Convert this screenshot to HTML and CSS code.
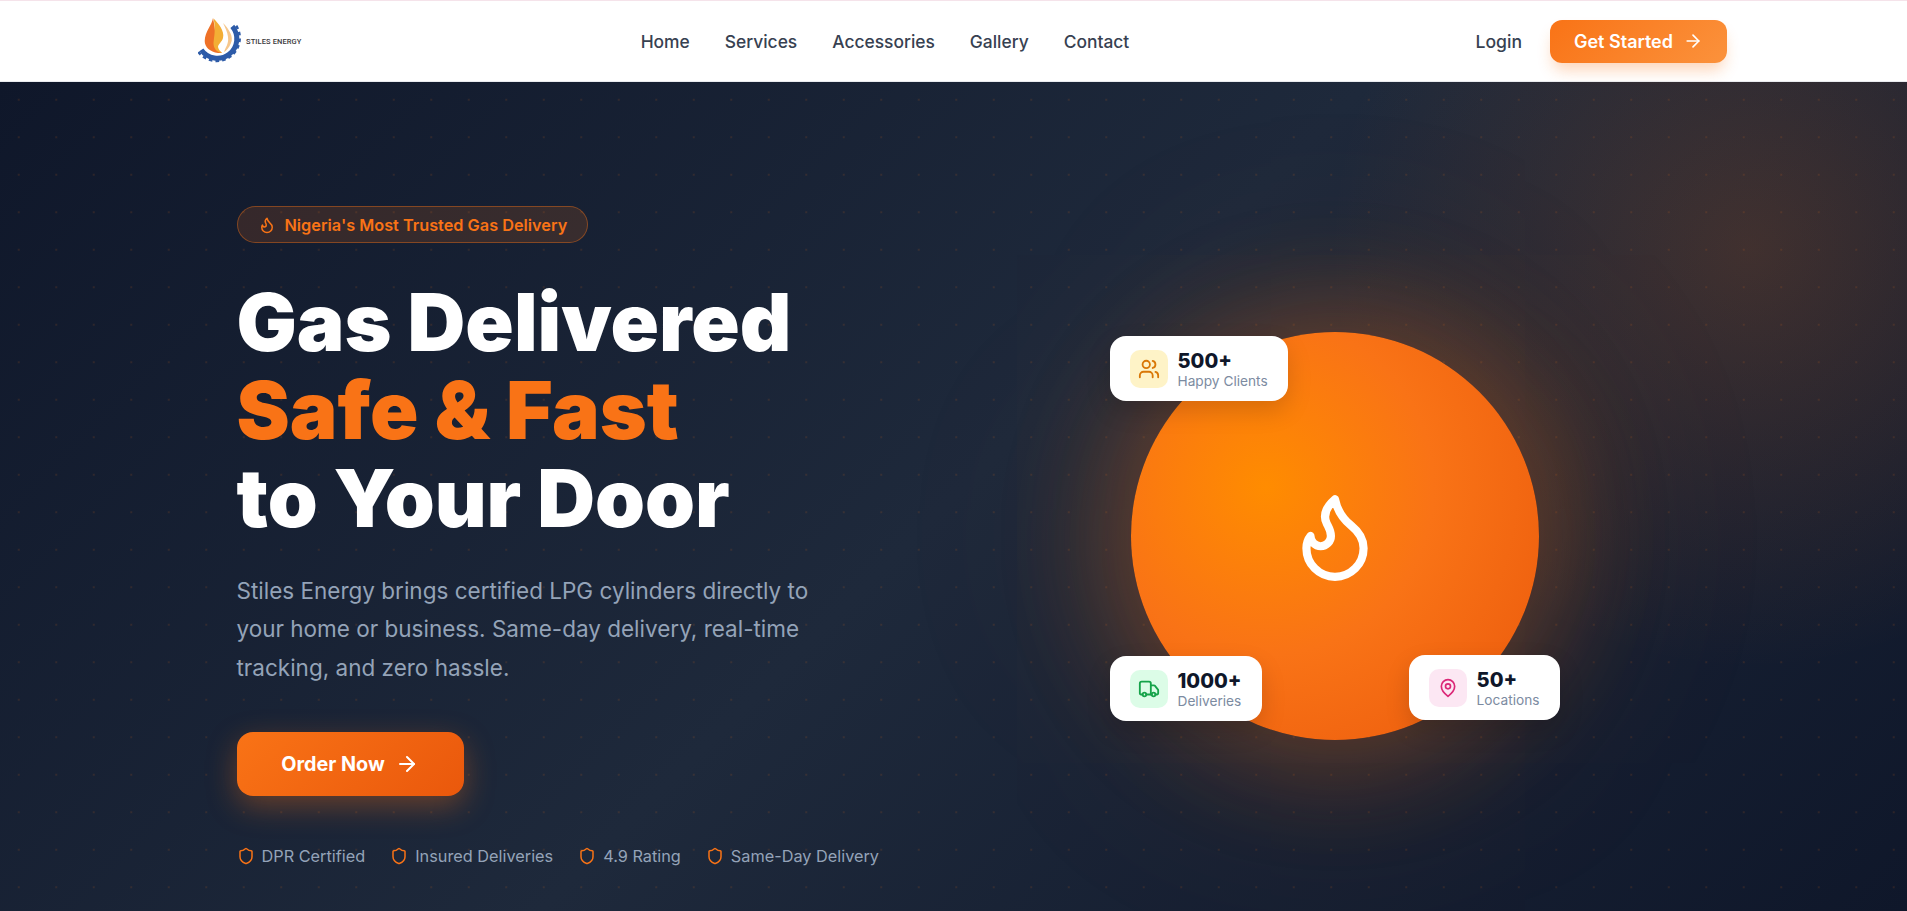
FILE: index.html
```html
<!DOCTYPE html>
<html lang="en">
<head>
  <meta charset="UTF-8">
  <title>Stiles Energy</title>
  <meta name="viewport" content="width=device-width, initial-scale=1">
  <link rel="stylesheet" href="styles.css">
</head>
<body>
<header class="navbar">
  <div class="navbar-inner">
    <a class="logo" href="#">
      <svg class="logo-mark" viewBox="0 0 44 48" aria-hidden="true">
        <path class="gear-ring" d="M3.3 32.9A19.5 19.5 0 1 0 34.3 9.3"/>
        <path class="gear-teeth" d="M.4 34.9A23 23 0 1 0 37 7"/>
        <path fill="#ee7127" d="M15 1C14 8 7 14 6.7 24C6.7 30 12 35 20 36L24 36C20 33 16 30 17 25C18 20 17 10 15 1z"/>
        <path fill="#f3ae35" d="M15.5 1.5C20 6 27 14 25 21C24 25 20 27 20 30C20.5 33 23 35 24 36C18 35 15.5 31 15.5 26C16 20 18 12 15.5 1.5z"/>
        <path fill="#f6c78c" d="M25 6C31 12 36 20 33 26C31 31 28 34 26 35C27 31 31 27 30 20C29.5 15 27 10 25 6z"/>
      </svg>
      <span class="logo-text">STILES ENERGY</span>
    </a>
    <nav class="nav-links">
      <a href="#">Home</a>
      <a href="#">Services</a>
      <a href="#">Accessories</a>
      <a href="#">Gallery</a>
      <a href="#">Contact</a>
    </nav>
    <div class="nav-actions">
      <a class="login" href="#">Login</a>
      <a class="btn-started" href="#">Get Started
        <svg class="icon" viewBox="0 0 24 24"><path d="M5 12h14"/><path d="m12 5 7 7-7 7"/></svg>
      </a>
    </div>
  </div>
</header>

<section class="hero">
  <div class="hero-inner">
    <div class="hero-copy">
      <div class="pill">
        <svg class="icon pill-icon" viewBox="0 0 24 24"><path d="M8.5 14.5A2.5 2.5 0 0 0 11 12c0-1.38-.5-2-1-3-1.072-2.143-.224-4.054 2-6 .5 2.5 2 4.9 4 6.5 2 1.6 3 3.5 3 5.5a7 7 0 1 1-14 0c0-1.153.433-2.294 1-3a2.5 2.5 0 0 0 2.5 2.5z"/></svg>
        Nigeria's Most Trusted Gas Delivery
      </div>
      <h1>Gas Delivered<br><span class="accent">Safe &amp; Fast</span><br>to Your Door</h1>
      <p class="lead">Stiles Energy brings certified LPG cylinders directly to your home or business. Same-day delivery, real-time tracking, and zero hassle.</p>
      <a class="btn-order" href="#">Order Now
        <svg class="icon" viewBox="0 0 24 24"><path d="M5 12h14"/><path d="m12 5 7 7-7 7"/></svg>
      </a>
      <ul class="trust">
        <li><svg class="icon" viewBox="0 0 24 24"><path d="M20 13c0 5-3.5 7.5-7.66 8.95a1 1 0 0 1-.67-.01C7.5 20.5 4 18 4 13V6a1 1 0 0 1 1-1c2 0 4.5-1.2 6.24-2.72a1.17 1.17 0 0 1 1.52 0C14.51 3.81 17 5 19 5a1 1 0 0 1 1 1z"/></svg>DPR Certified</li>
        <li><svg class="icon" viewBox="0 0 24 24"><path d="M20 13c0 5-3.5 7.5-7.66 8.95a1 1 0 0 1-.67-.01C7.5 20.5 4 18 4 13V6a1 1 0 0 1 1-1c2 0 4.5-1.2 6.24-2.72a1.17 1.17 0 0 1 1.52 0C14.51 3.81 17 5 19 5a1 1 0 0 1 1 1z"/></svg>Insured Deliveries</li>
        <li><svg class="icon" viewBox="0 0 24 24"><path d="M20 13c0 5-3.5 7.5-7.66 8.95a1 1 0 0 1-.67-.01C7.5 20.5 4 18 4 13V6a1 1 0 0 1 1-1c2 0 4.5-1.2 6.24-2.72a1.17 1.17 0 0 1 1.52 0C14.51 3.81 17 5 19 5a1 1 0 0 1 1 1z"/></svg>4.9 Rating</li>
        <li><svg class="icon" viewBox="0 0 24 24"><path d="M20 13c0 5-3.5 7.5-7.66 8.95a1 1 0 0 1-.67-.01C7.5 20.5 4 18 4 13V6a1 1 0 0 1 1-1c2 0 4.5-1.2 6.24-2.72a1.17 1.17 0 0 1 1.52 0C14.51 3.81 17 5 19 5a1 1 0 0 1 1 1z"/></svg>Same-Day Delivery</li>
      </ul>
    </div>
    <div class="hero-visual">
      <div class="orb">
        <svg class="icon orb-icon" viewBox="0 0 24 24"><path d="M8.5 14.5A2.5 2.5 0 0 0 11 12c0-1.38-.5-2-1-3-1.072-2.143-.224-4.054 2-6 .5 2.5 2 4.9 4 6.5 2 1.6 3 3.5 3 5.5a7 7 0 1 1-14 0c0-1.153.433-2.294 1-3a2.5 2.5 0 0 0 2.5 2.5z"/></svg>
        <div class="stat stat-clients">
          <span class="stat-icon amber"><svg class="icon" viewBox="0 0 24 24"><path d="M16 21v-2a4 4 0 0 0-4-4H6a4 4 0 0 0-4 4v2"/><circle cx="9" cy="7" r="4"/><path d="M22 21v-2a4 4 0 0 0-3-3.87"/><path d="M16 3.13a4 4 0 0 1 0 7.75"/></svg></span>
          <div><div class="stat-num">500+</div><div class="stat-label">Happy Clients</div></div>
        </div>
        <div class="stat stat-deliveries">
          <span class="stat-icon green"><svg class="icon" viewBox="0 0 24 24"><path d="M14 18V6a2 2 0 0 0-2-2H4a2 2 0 0 0-2 2v11a1 1 0 0 0 1 1h2"/><path d="M15 18H9"/><path d="M19 18h2a1 1 0 0 0 1-1v-3.65a1 1 0 0 0-.22-.624l-3.48-4.35A1 1 0 0 0 17.52 8H14"/><circle cx="17" cy="18" r="2"/><circle cx="7" cy="18" r="2"/></svg></span>
          <div><div class="stat-num">1000+</div><div class="stat-label">Deliveries</div></div>
        </div>
        <div class="stat stat-locations">
          <span class="stat-icon pink"><svg class="icon" viewBox="0 0 24 24"><path d="M20 10c0 6-8 12-8 12s-8-6-8-12a8 8 0 0 1 16 0Z"/><circle cx="12" cy="10" r="3"/></svg></span>
          <div><div class="stat-num">50+</div><div class="stat-label">Locations</div></div>
        </div>
      </div>
    </div>
  </div>
</section>
</body>
</html>
```

FILE: styles.css
```css
* {
    box-sizing: border-box;
}

html,
body {
    height: 100%;
}

body {
    margin: 0;
    font-family: "Inter", "Liberation Sans", sans-serif;
    overflow: hidden;
}

a {
    color: inherit;
    text-decoration: none;
}

.icon {
    width: 20px;
    height: 20px;
    fill: none;
    stroke: currentColor;
    stroke-width: 2;
    stroke-linecap: round;
    stroke-linejoin: round;
    flex: none;
}

/* navbar */
.navbar {
    height: 82px;
    background: #fff;
    border-top: 1px solid #f5e3ea;
    border-bottom: 1px solid #e9ebef;
}

.navbar-inner {
    height: 100%;
    padding: 0 180px 0 198px;
    display: flex;
    align-items: center;
    justify-content: space-between;
}

.logo {
    display: flex;
    align-items: center;
    gap: 4px;
}

.logo-mark {
    width: 44px;
    height: 48px;
}

.gear-ring,
.gear-teeth {
    fill: none;
    stroke: #2d5ba8;
}

.gear-ring {
    stroke-width: 5;
}

.gear-teeth {
    stroke-width: 2.5;
    stroke-dasharray: 3.6 3;
}

.logo-text {
    font-family: "Roboto", "Liberation Sans", sans-serif;
    font-size: 7.5px;
    font-weight: 500;
    color: #3a3a3c;
    letter-spacing: .1px;
}

.nav-links {
    display: flex;
    gap: 35px;
    font-size: 17.4px;
    font-weight: 500;
    color: #374151;
    margin-right: 7px;
}

.nav-actions {
    display: flex;
    align-items: center;
    gap: 28px;
}

.login {
    font-size: 17.6px;
    font-weight: 500;
    color: #374151;
}

.btn-started {
    width: 177px;
    height: 43px;
    border-radius: 12px;
    background: linear-gradient(135deg, #f97316, #fb923c);
    color: #fff;
    font-size: 18px;
    font-weight: 600;
    display: flex;
    align-items: center;
    justify-content: center;
    gap: 10px;
    box-shadow: 0 10px 15px -3px rgba(249, 115, 22, .3);
}

/* hero */
.hero {
    height: calc(100vh - 82px);
    background-color: #162033;
    background-image:
        radial-gradient(circle, rgba(249, 115, 22, .12) 1px, transparent 1.5px),
        radial-gradient(circle 420px at 1750px 167px, rgba(249, 115, 22, .18), transparent),
        linear-gradient(135deg, #0f172a 0%, #1e293b 50%, #0f172a 100%);
    background-size: 37.5px 37.5px, auto, auto;
    background-position: 0 -1px, 0 0, 0 0;
}

.hero-inner {
    width: 1536px;
    margin: 0 auto;
    padding: 0 51px;
    display: flex;
}

.hero-copy {
    width: 670px;
    padding-top: 124px;
}

.pill {
    display: inline-flex;
    align-items: center;
    gap: 9px;
    height: 37px;
    padding: 0 20px;
    border-radius: 999px;
    border: 1px solid rgba(249, 115, 22, .4);
    background: rgba(249, 115, 22, .15);
    color: #f97316;
    font-size: 16.3px;
    font-weight: 600;
}

.pill-icon {
    width: 18px;
    height: 18px;
}

h1 {
    margin: 35px 0 0;
    font-size: 80px;
    line-height: 88px;
    font-weight: 900;
    color: #fff;
}

.accent {
    color: #f97316;
}

.lead {
    margin: 30px 0 0;
    width: 590px;
    font-size: 22.5px;
    line-height: 38.25px;
    color: #94a3b8;
}

.btn-order {
    margin-top: 45.5px;
    width: 227px;
    height: 64px;
    border-radius: 16px;
    background: linear-gradient(135deg, #f97316, #ea580c);
    color: #fff;
    font-size: 19.8px;
    font-weight: 700;
    display: flex;
    align-items: center;
    justify-content: center;
    gap: 10px;
    box-shadow: 0 10px 30px rgba(249, 115, 22, .35);
}

.btn-order .icon {
    width: 24px;
    height: 24px;
}

.trust {
    list-style: none;
    margin: 50px 0 0;
    padding: 0;
    display: flex;
    gap: 25px;
    font-size: 16.3px;
    color: #94a3b8;
}

.trust li {
    display: flex;
    align-items: center;
    gap: 7px;
}

.trust .icon {
    width: 18px;
    height: 18px;
    color: #f97316;
}

.hero-visual {
    flex: 1;
    padding: 250px 0 0 224px;
}

.orb {
    position: relative;
    width: 408px;
    height: 408px;
    border-radius: 50%;
    background: radial-gradient(circle at 33% 38%, #ff8c00, #f97316 45%, #ea580c);
    box-shadow: 0 0 100px 30px rgba(249, 115, 22, .25), 0 0 200px 60px rgba(249, 115, 22, .1);
    display: flex;
    align-items: center;
    justify-content: center;
    color: #fff;
}

.orb-icon {
    width: 98px;
    height: 98px;
}

.stat {
    position: absolute;
    display: flex;
    align-items: center;
    gap: 10px;
    height: 65px;
    padding: 0 20px;
    border-radius: 16px;
    background: #fff;
    box-shadow: 0 10px 25px rgba(0, 0, 0, .15);
}

.stat-clients {
    left: -21px;
    top: 4px;
}

.stat-deliveries {
    left: -21px;
    top: 324px;
}

.stat-locations {
    right: -21px;
    top: 323px;
}

.stat-icon {
    width: 38px;
    height: 38px;
    border-radius: 10px;
    display: flex;
    align-items: center;
    justify-content: center;
}

.amber {
    background: #fef3c7;
    color: #d97706;
}

.amber .icon,
.green .icon {
    width: 22px;
    height: 22px;
}

.green {
    background: #dcfce7;
    color: #16a34a;
}

.pink {
    background: #fce7f3;
    color: #db2777;
}

.stat-num {
    font-size: 20px;
    line-height: 24px;
    font-weight: 800;
    color: #0f172a;
}

.stat-label {
    font-size: 13.7px;
    line-height: 16px;
    color: #7c8ba1;
}
```
